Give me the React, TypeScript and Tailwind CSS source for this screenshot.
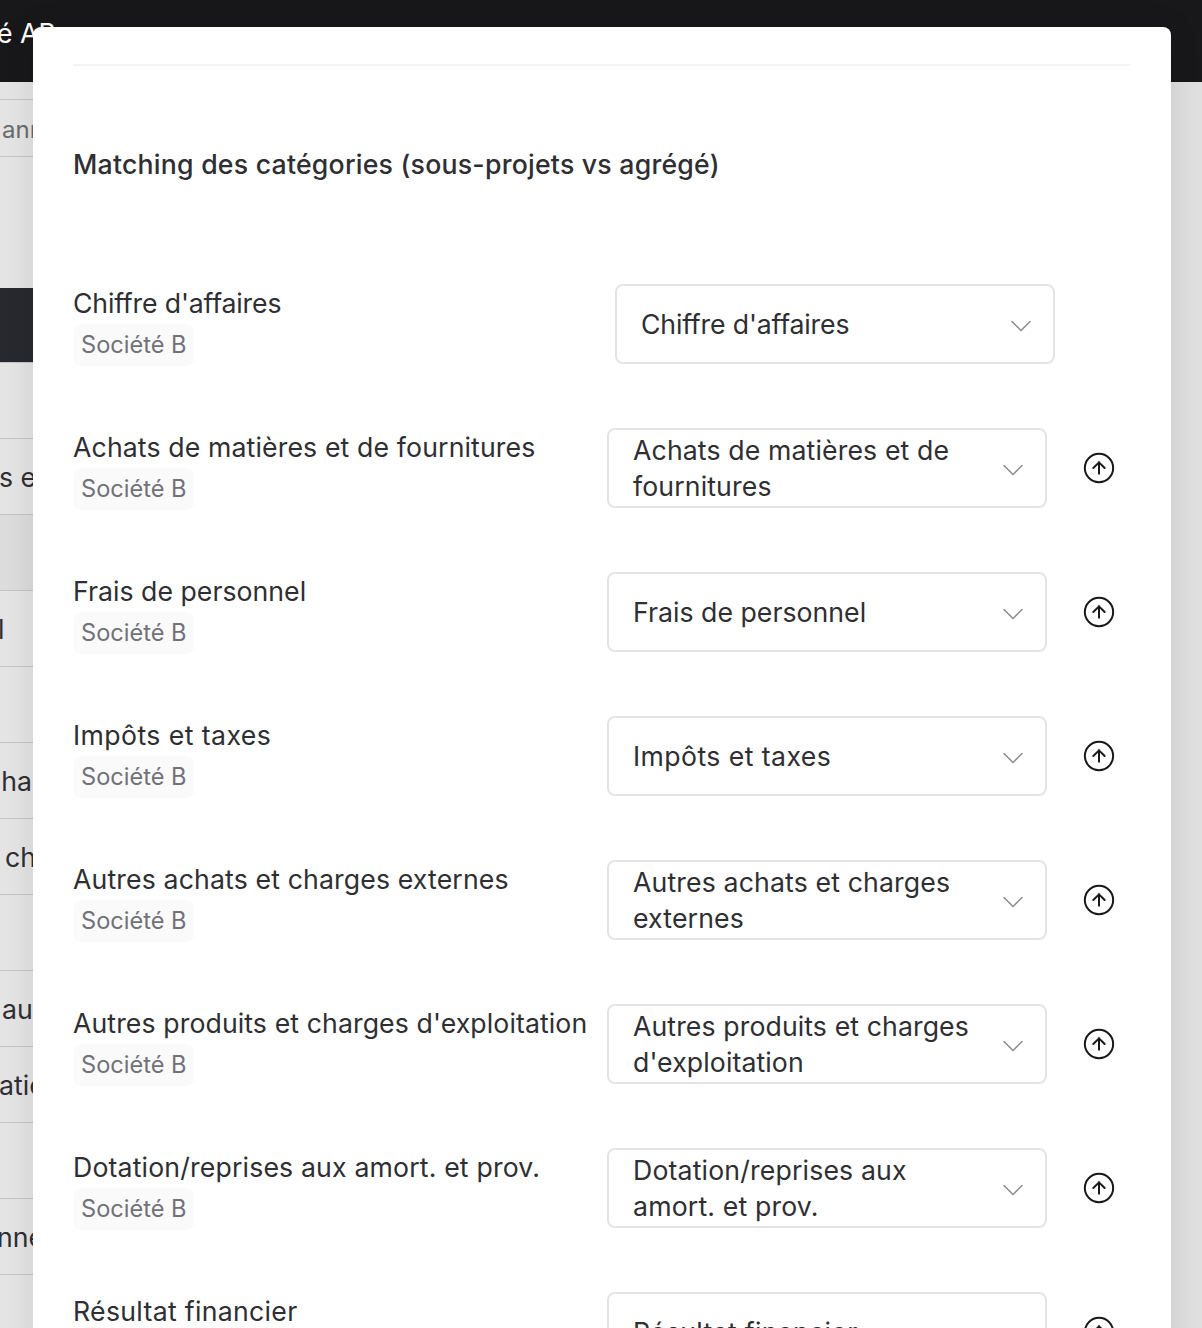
import { ChevronDown, CircleArrowUp } from "lucide-react";

const pageRows = [
  { text: "", cls: "" },
  { text: "s et", cls: "-ml-px" },
  { text: "", cls: "", shade: true },
  { text: "l", cls: "-ml-[2px]" },
  { text: "", cls: "" },
  { text: "cha", cls: "-ml-[14px]" },
  { text: "charges", cls: "ml-[5px]" },
  { text: "", cls: "" },
  { text: "au", cls: "ml-[2px]" },
  { text: "ation", cls: "-ml-px" },
  { text: "", cls: "" },
  { text: "nnel", cls: "-ml-[3px]" },
  { text: "", cls: "" },
];

const categories = [
  { label: "Chiffre d'affaires", first: true, tracking: "tracking-[-0.16px]" },
  { label: "Achats de matières et de fournitures", tracking: "tracking-[0.13px]" },
  { label: "Frais de personnel", tracking: "tracking-[0.02px]" },
  { label: "Impôts et taxes", tracking: "tracking-[0.42px]" },
  { label: "Autres achats et charges externes", tracking: "tracking-[0.14px]" },
  { label: "Autres produits et charges d'exploitation", tracking: "tracking-[0.1px]" },
  { label: "Dotation/reprises aux amort. et prov.", tracking: "tracking-[0.16px]" },
  { label: "Résultat financier", tracking: "tracking-[0.3px]" },
];

type Category = { label: string; first?: boolean; tracking: string };

function CategoryRow({ label, first, tracking }: Category) {
  return (
    <div className="flex h-20 items-start">
      <div className="w-[534px] shrink-0 pt-px">
        <p className={`text-[26.67px] leading-9 whitespace-nowrap ${tracking}`}>{label}</p>
        <span className="mt-[3px] inline-block h-[42px] w-[121px] rounded-lg bg-[#fafafa] pl-2 text-[23.6px] leading-[42px] whitespace-nowrap text-[#71717a]">Société B</span>
      </div>
      <div className={`flex h-20 w-[440px] shrink-0 items-center rounded-lg border-2 border-[#e4e4e7] pr-[14px] pl-6 ${first ? "ml-2" : ""}`}>
        <span className={`flex-1 pr-3 text-[26.67px] leading-9 ${tracking}`}>{label}</span>
        <ChevronDown size={36} strokeWidth={1} className="mt-1 shrink-0 text-[#8a8a8a]" />
      </div>
      {!first && <CircleArrowUp size={34} strokeWidth={1.4} className="mt-[23px] ml-[35px] shrink-0 text-[#18181b]" />}
    </div>
  );
}

export default function App() {
  return (
    <div className="relative h-[1328px] overflow-hidden bg-[#dfdfdf] font-['Inter',sans-serif] text-[#2e2e33]">
      <div className="flex h-[82px] items-center bg-[#18181b] pb-[16px] text-[26.67px] text-white">
        <span className="-ml-[3px] whitespace-nowrap">é AB</span>
      </div>
      <div className="w-[33px] overflow-hidden bg-[#e4e4e4]">
        <div className="mt-[17px] h-[58px] w-[33px] border-y border-[#c4c4c4] pl-[2px] text-2xl leading-[60px] text-[#6b6b6b]">
          <span className="whitespace-nowrap">ann</span>
        </div>
        <div className="h-[131px]" />
        <div className="h-[74px] bg-[#28292e]" />
        {pageRows.map((row, i) => (
          <div key={i} className={`h-[76px] border-t border-[#c4c4c4] text-[26.67px] leading-[76px] whitespace-nowrap ${row.shade ? "bg-[#dcdcdc]" : ""}`}>
            <span className={`block ${row.cls}`}>{row.text}</span>
          </div>
        ))}
      </div>

      <div className="absolute top-[27px] left-[33px] h-[1400px] w-[1138px] rounded-t-lg bg-white px-10 shadow-[0_0_30px_rgba(0,0,0,0.1)]">
        <div className="mt-[37px] h-0.5 bg-[#f4f4f5]" />
        <h2 className="mt-[78px] text-[26.67px] leading-10 font-medium tracking-[0.23px]">Matching des catégories (sous-projets vs agrégé)</h2>
        <div className="mt-[100px] flex flex-col gap-16">
          {categories.map((c) => (
            <CategoryRow key={c.label} {...c} />
          ))}
        </div>
      </div>
    </div>
  );
}
